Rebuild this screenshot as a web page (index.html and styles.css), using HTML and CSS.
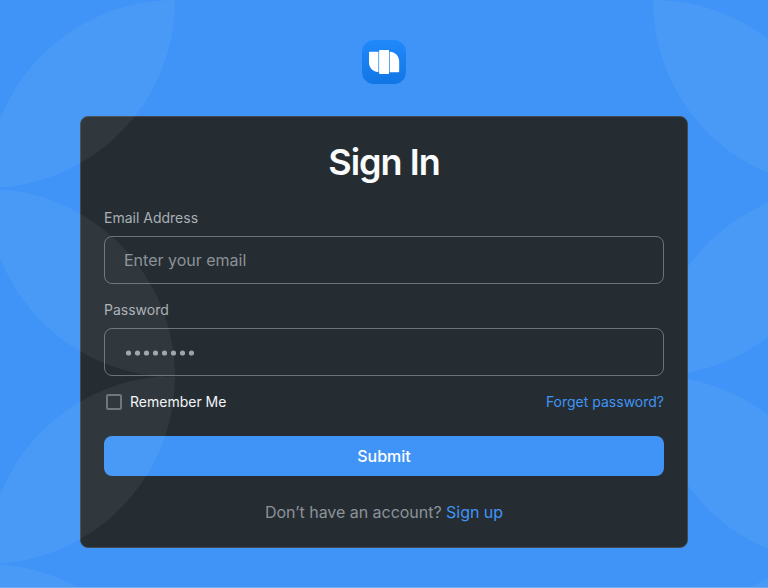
FILE: index.html
```html
<!DOCTYPE html>
<html lang="en">
<head>
<meta charset="utf-8">
<title>Sign In</title>
<link rel="stylesheet" href="styles.css">
</head>
<body>
<svg class="pattern pattern-right" viewBox="0 0 115 588" aria-hidden="true">
  <path d="M0 0A188 188 0 0 1 188 188A188 188 0 0 1 0 0ZM188 188A188 188 0 0 0 0 376A188 188 0 0 0 188 188ZM0 376A188 188 0 0 1 188 564A188 188 0 0 1 0 376ZM188 564A188 188 0 0 0 0 752A188 188 0 0 0 188 564Z"/>
</svg>
<main class="page">
  <svg class="logo" viewBox="0 0 44 44" role="img" aria-label="Logo">
    <defs><linearGradient id="tile" x1="0" y1="0" x2="0" y2="1"><stop offset="0" stop-color="#2189fb"/><stop offset="1" stop-color="#1176e5"/></linearGradient></defs>
    <rect width="44" height="44" rx="12" fill="url(#tile)"/>
    <path fill="#fff" d="M8 11.800h8.400v20.400C11 31.800 7 28 7 22.300V12.800q0-1 1-1ZM18 10h8.200q.9 0 .9.900v22.200q0 .9-.9.900H18q-.9 0-.9-.9V10.900q0-.9.900-.9ZM27.800 11.800C33 12 37.200 16 37.200 21.500v9.700q0 1-1 1h-8.400Z"/>
  </svg>
  <form class="card">
    <h1 class="title">Sign In</h1>
    <label class="label" for="email">Email Address</label>
    <input class="field" id="email" type="email" placeholder="Enter your email">
    <span class="label">Password</span>
    <div class="field password">
      <svg class="dots" width="68" height="6" viewBox="0 0 68 6"><g><circle cx="2.500" cy="3" r="2.600"/><circle cx="11.500" cy="3" r="2.600"/><circle cx="20.500" cy="3" r="2.600"/><circle cx="29.500" cy="3" r="2.600"/><circle cx="38.500" cy="3" r="2.600"/><circle cx="47.500" cy="3" r="2.600"/><circle cx="56.500" cy="3" r="2.600"/><circle cx="65.500" cy="3" r="2.600"/></g></svg>
    </div>
    <div class="options">
      <label class="remember"><span class="box"></span>Remember Me</label>
      <a class="link">Forget password?</a>
    </div>
    <button class="submit" type="button">Submit</button>
    <p class="signup">Don’t have an account? <a class="link">Sign up</a></p>
  </form>
</main>
<svg class="pattern pattern-left" viewBox="13 0 175 588" aria-hidden="true">
  <path d="M188 0A188 188 0 0 0 0 188A188 188 0 0 0 188 0ZM0 189A188 188 0 0 1 188 377A188 188 0 0 1 0 189ZM188 376A188 188 0 0 0 0 564A188 188 0 0 0 188 376ZM0 564A188 188 0 0 1 188 752A188 188 0 0 1 0 564Z"/>
</svg>
</body>
</html>
```
FILE: styles.css
```css
* { box-sizing: border-box; }
body {
  position: relative;
  margin: 0;
  height: 588px;
  overflow: hidden;
  border-bottom: 1px solid #70aff7;
  background: #4094f7;
  font-family: Inter, sans-serif;
}
.pattern {
  position: absolute;
  top: 0;
  height: 588px;
  fill: rgba(255, 255, 255, .05);
  pointer-events: none;
}
.pattern-left { left: 0; width: 175px; }
.pattern-right { right: 0; width: 115px; }
.page {
  position: relative;
  display: flex;
  flex-direction: column;
  align-items: center;
  padding-top: 40px;
}
.logo { width: 44px; height: 44px; margin-bottom: 32px; }
.card {
  display: flex;
  flex-direction: column;
  width: 608px;
  height: 432px;
  padding: 23px 23px 0;
  border: 1px solid #434b50;
  border-radius: 8px;
  background: #252d33;
}
.title {
  margin: 0 0 23px;
  color: #f9fbfc;
  font-size: 36px;
  font-weight: 600;
  line-height: 45px;
  letter-spacing: -1px;
  text-align: center;
}
.label {
  height: 20px;
  margin-bottom: 8px;
  color: #a9afb5;
  font-size: 14px;
  line-height: 20px;
}
.field {
  width: 100%;
  height: 48px;
  margin: 0 0 16px;
  padding: 0 19px;
  border: 1px solid #6b7278;
  border-radius: 8px;
  background: transparent;
  font: 16px Inter, sans-serif;
}
.field::placeholder { color: #8c9298; opacity: 1; }
.password { display: flex; align-items: center; padding-left: 21px; }
.dots { fill: #9ca3a9; margin-top: 1px; }
.options {
  display: flex;
  justify-content: space-between;
  height: 20px;
  font-size: 14px;
  line-height: 20px;
}
.remember { display: flex; align-items: center; gap: 8px; padding-left: 2px; color: #f2f5f7; }
.box { width: 16px; height: 16px; border: 2px solid #686f75; border-radius: 2px; }
.link { color: #4094f7; }
.submit {
  height: 40px;
  margin: 24px 0 0;
  padding: 0;
  border: 0;
  border-radius: 8px;
  background: #4094f7;
  color: #fff;
  font: 500 16px Inter, sans-serif;
}
.signup {
  margin: 24px 0 0;
  color: #8c9298;
  font-size: 16px;
  line-height: 24px;
  letter-spacing: -.03px;
  text-align: center;
}
```
